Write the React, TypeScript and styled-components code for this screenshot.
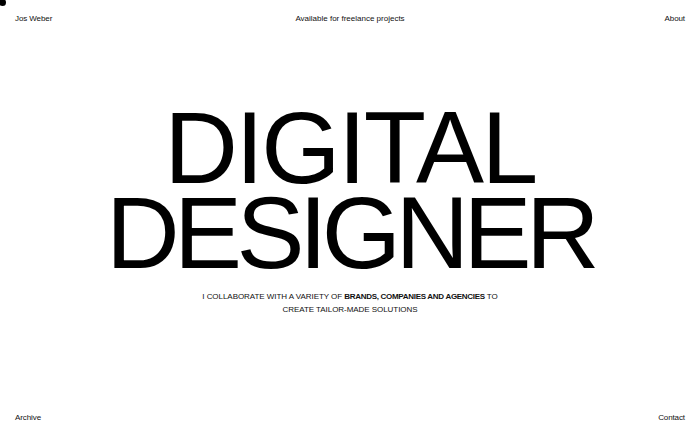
import styled, { createGlobalStyle } from 'styled-components'

const GlobalStyle = createGlobalStyle`
  html, body {
    margin: 0;
    padding: 0;
    background: #ffffff;
  }
  body {
    font-family: "Liberation Sans", Arial, sans-serif;
    color: #111111;
  }
  #root {
    height: 100vh;
  }
`

export default function App() {
  return (
    <>
      <GlobalStyle />
      <StyledPage>
        <StyledCursor />
        <StyledTopBar>
          <StyledLink href="#">Jos Weber</StyledLink>
          <StyledStatus>Available for freelance projects</StyledStatus>
          <StyledEndLink href="#">About</StyledEndLink>
        </StyledTopBar>
        <StyledHero>
          <StyledTitle>
            <StyledTitleLine $tracking={-0.025}>DIGITAL</StyledTitleLine>
            <StyledTitleLine $tracking={-0.055}>DESIGNER</StyledTitleLine>
          </StyledTitle>
          <StyledIntro>
            I COLLABORATE WITH A VARIETY OF <strong>BRANDS, COMPANIES AND AGENCIES</strong> TO
            <br />
            CREATE TAILOR-MADE SOLUTIONS
          </StyledIntro>
        </StyledHero>
        <StyledBottomBar>
          <StyledLink href="#">Archive</StyledLink>
          <StyledLink href="#">Contact</StyledLink>
        </StyledBottomBar>
      </StyledPage>
    </>
  )
}

const StyledPage = styled.div`
  position: relative;
  height: 100%;
  box-sizing: border-box;
  display: flex;
  flex-direction: column;
  padding: 14px 15px;
  overflow: hidden;
`

const StyledCursor = styled.span`
  position: absolute;
  left: -1px;
  top: -1px;
  width: 7px;
  height: 7px;
  border-radius: 50%;
  background: #000;
`

const StyledTopBar = styled.header`
  display: grid;
  grid-template-columns: 1fr auto 1fr;
  align-items: center;
  font-size: 8px;
  line-height: 10px;
`

const StyledBottomBar = styled.footer`
  display: flex;
  justify-content: space-between;
  align-items: center;
  font-size: 8px;
  line-height: 10px;
`

const StyledLink = styled.a`
  color: #111;
  text-decoration: none;
  letter-spacing: -0.1px;
`

const StyledEndLink = styled(StyledLink)`
  justify-self: end;
`

const StyledStatus = styled.span`
  color: #111;
`

const StyledHero = styled.main`
  flex: 1;
  display: flex;
  flex-direction: column;
  align-items: center;
  justify-content: center;
  padding-bottom: 16px;
`

const StyledTitle = styled.h1`
  margin: 0;
  font-weight: 400;
  font-size: 102px;
  line-height: 85px;
  text-align: center;
  color: #000;
`

const StyledTitleLine = styled.span<{ $tracking: number }>`
  display: block;
  letter-spacing: ${({ $tracking }) => $tracking}em;
`

const StyledIntro = styled.p`
  margin: 14px 0 0;
  font-size: 8px;
  line-height: 13px;
  letter-spacing: -0.05px;
  text-align: center;
  color: #111;
  strong {
    font-weight: 700;
    letter-spacing: -0.3px;
  }
`
